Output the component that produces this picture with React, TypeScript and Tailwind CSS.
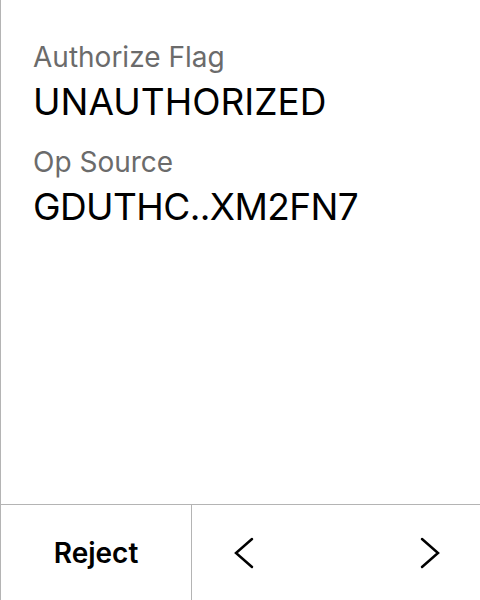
import React from "react";

function Chevron({ dir }: { dir: "left" | "right" }) {
  return (
    <svg width="20" height="32" viewBox="0 0 20 32" fill="none" stroke="#000" strokeWidth="2.5" strokeLinecap="round" strokeLinejoin="miter">
      {dir === "left" ? <polyline points="18,2 2,16 18,30" /> : <polyline points="2,2 18,16 2,30" />}
    </svg>
  );
}

export default function App() {
  return (
    <div className="w-[480px] h-[600px] bg-white flex flex-col border-l border-[#b4b4b4]" style={{ fontFamily: "Inter, 'Noto Sans', sans-serif" }}>
      <div className="flex-1 flex flex-col pl-8 pt-[39px]">
        <div className="text-[28px] leading-[36px] text-[#6b6b6b]">Authorize Flag</div>
        <div className="text-[37px] leading-[48px] text-black mt-[3px]">UNAUTHORIZED</div>
        <div className="text-[28px] leading-[36px] text-[#6b6b6b] mt-[18px]">Op Source</div>
        <div className="text-[37px] leading-[48px] text-black mt-[3px] tracking-[-0.6px]">GDUTHC..XM2FN7</div>
      </div>
      <div className="h-[96px] border-t border-[#b4b4b4] flex">
        <div className="w-[191px] border-r border-[#b4b4b4] flex items-center justify-center text-[28px] font-semibold text-black">Reject</div>
        <div className="flex-1 flex items-center justify-between pl-[42px] pr-[40px]">
          <Chevron dir="left" />
          <Chevron dir="right" />
        </div>
      </div>
    </div>
  );
}
